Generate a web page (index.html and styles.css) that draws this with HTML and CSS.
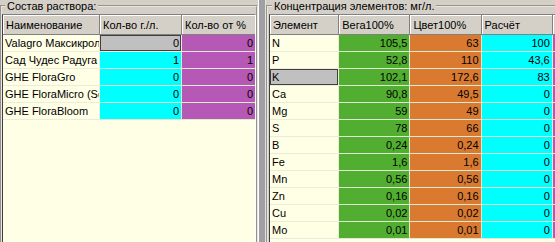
FILE: index.html
```html
<!DOCTYPE html>
<html lang="ru">
<head>
<meta charset="utf-8">
<title>Раствор</title>
<link rel="stylesheet" href="styles.css">
</head>
<body>
<div class="app">
  <section class="panel panel-left">
    <fieldset class="group">
      <legend class="caption">Состав раствора:</legend>
      <div class="grid">
        <table class="tbl tbl-left">
          <colgroup><col class="c-name"><col class="c-gl"><col class="c-pct"></colgroup>
          <thead>
            <tr><th>Наименование</th><th>Кол-во г./л.</th><th>Кол-во от %</th></tr>
          </thead>
          <tbody>
            <tr><td class="name">Valagro Максикрол</td><td class="num sel">0</td><td class="num purple">0</td></tr>
            <tr><td class="name">Сад Чудес Радуга</td><td class="num cyan">1</td><td class="num purple">1</td></tr>
            <tr><td class="name">GHE FloraGro</td><td class="num cyan">0</td><td class="num purple">0</td></tr>
            <tr><td class="name">GHE FloraMicro (Soft)</td><td class="num cyan">0</td><td class="num purple">0</td></tr>
            <tr><td class="name">GHE FloraBloom</td><td class="num cyan">0</td><td class="num purple">0</td></tr>
          </tbody>
        </table>
      </div>
    </fieldset>
  </section>
  <div class="splitter"></div>
  <section class="panel panel-right">
    <fieldset class="group">
      <legend class="caption">Концентрация элементов: мг/л.</legend>
      <div class="grid">
        <table class="tbl tbl-right">
          <colgroup><col class="c-el"><col class="c-v"><col class="c-v"><col class="c-v"><col class="c-v"></colgroup>
          <thead>
            <tr><th>Элемент</th><th>Вега100%</th><th>Цвет100%</th><th>Расчёт</th><th></th></tr>
          </thead>
          <tbody>
            <tr><td class="name">N</td><td class="num green">105,5</td><td class="num orange">63</td><td class="num cyan">100</td><td class="purple"></td></tr>
            <tr><td class="name">P</td><td class="num green">52,8</td><td class="num orange">110</td><td class="num cyan">43,6</td><td class="purple"></td></tr>
            <tr><td class="name sel">K</td><td class="num green">102,1</td><td class="num orange">172,6</td><td class="num cyan">83</td><td class="purple"></td></tr>
            <tr><td class="name">Ca</td><td class="num green">90,8</td><td class="num orange">49,5</td><td class="num cyan">0</td><td class="purple"></td></tr>
            <tr><td class="name">Mg</td><td class="num green">59</td><td class="num orange">49</td><td class="num cyan">0</td><td class="purple"></td></tr>
            <tr><td class="name">S</td><td class="num green">78</td><td class="num orange">66</td><td class="num cyan">0</td><td class="purple"></td></tr>
            <tr><td class="name">B</td><td class="num green">0,24</td><td class="num orange">0,24</td><td class="num cyan">0</td><td class="purple"></td></tr>
            <tr><td class="name">Fe</td><td class="num green">1,6</td><td class="num orange">1,6</td><td class="num cyan">0</td><td class="purple"></td></tr>
            <tr><td class="name">Mn</td><td class="num green">0,56</td><td class="num orange">0,56</td><td class="num cyan">0</td><td class="purple"></td></tr>
            <tr><td class="name">Zn</td><td class="num green">0,16</td><td class="num orange">0,16</td><td class="num cyan">0</td><td class="purple"></td></tr>
            <tr><td class="name">Cu</td><td class="num green">0,02</td><td class="num orange">0,02</td><td class="num cyan">0</td><td class="purple"></td></tr>
            <tr><td class="name">Mo</td><td class="num green">0,01</td><td class="num orange">0,01</td><td class="num cyan">0</td><td class="purple"></td></tr>
          </tbody>
        </table>
      </div>
    </fieldset>
  </section>
</div>
</body>
</html>
```

FILE: styles.css
```css
* { box-sizing: border-box; }

html, body {
  margin: 0;
  padding: 0;
  width: 555px;
  height: 242px;
  overflow: hidden;
  background: #d4d0c8;
  font-family: "Liberation Sans", Arial, sans-serif;
  font-size: 11px;
  color: #000;
}

.app {
  display: flex;
  height: 242px;
  width: 555px;
  overflow: hidden;
}

.panel {
  flex: none;
  display: flex;
  height: 100%;
}

.panel-left { width: 258px; }
.panel-right { width: 320px; }

.splitter {
  flex: none;
  width: 8px;
  height: 100%;
  background: #a0a0a4;
  border-left: 1px solid #ffffff;
  border-right: 1px solid #e4e2dc;
}

.group {
  flex: 1;
  min-width: 0;
  margin: 0;
  padding: 2px 0 0 0;
  border: 2px groove #e8e6e0;
  border-bottom: none;
  display: flex;
  flex-direction: column;
}

.panel-right .group {
  padding-left: 1px;
  border-right: none;
}

.caption {
  padding: 0 2px;
  margin-left: 3px;
  line-height: 12px;
  height: 12px;
  font-size: 11px;
}

.grid {
  flex: 1;
  background: #ffffe6;
  border-top: 1px solid #808080;
  border-left: 1px solid #404040;
  border-right: 1px solid #ffffff;
  overflow: hidden;
}

.tbl {
  border-collapse: separate;
  border-spacing: 0;
  table-layout: fixed;
}

.tbl-left { width: 253px; }
.tbl-right { width: 354px; }

.c-name { width: 97px; }
.c-gl { width: 82px; }
.c-pct { width: 74px; }
.c-el { width: 69px; }
.c-v { width: 71px; }

.tbl th {
  height: 20px;
  background: #d4d0c8;
  font-weight: normal;
  text-align: left;
  padding: 0 0 0 3px;
  border-right: 1px solid #808080;
  border-bottom: 1px solid #808080;
  box-shadow: inset 1px 1px 0 #ffffff;
  white-space: nowrap;
  overflow: hidden;
}

.tbl td {
  height: 17px;
  padding: 0 2px;
  border-right: 1px solid #ecebdc;
  border-bottom: 1px solid #ecebdc;
  white-space: nowrap;
  overflow: hidden;
  line-height: 15px;
}

.tbl td.name { padding-left: 2px; text-align: left; }
.tbl td.num { text-align: right; }

.green { background: #52ae31; }
.orange { background: #d97a30; }
.cyan { background: #00ffff; }
.purple { background: #b658b6; }

.tbl td.sel {
  background: #c0c0c0;
  box-shadow: inset 0 0 0 1px #404040;
}

.tbl td.green,
.tbl td.orange,
.tbl td.cyan,
.tbl td.purple {
  border-color: #dfe8d0;
}
```
